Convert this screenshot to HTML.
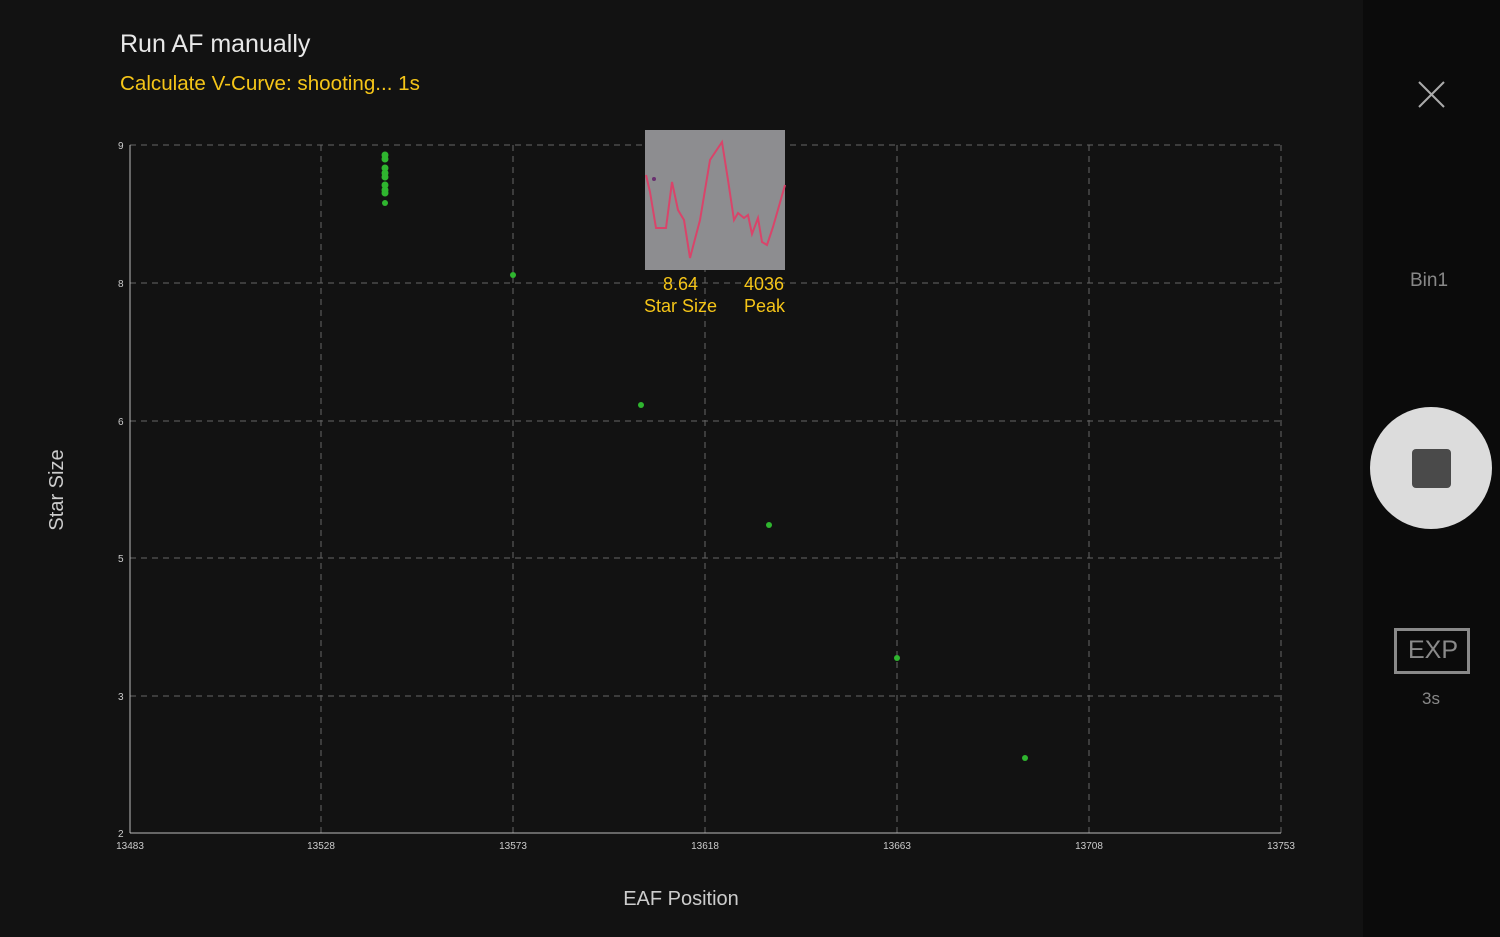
<!DOCTYPE html>
<html><head><meta charset="utf-8"><style>
body{margin:0;width:1500px;height:937px;background:#121212;overflow:hidden;font-family:"Liberation Sans",sans-serif;position:relative}
.t{position:absolute;white-space:nowrap}
</style></head><body>
<div style="position:absolute;left:1363px;top:0;width:137px;height:937px;background:#0b0b0b"></div>
<div class="t" style="left:120px;top:30px;font-size:25px;color:#e8e8e8">Run AF manually</div>
<div class="t" style="left:120px;top:72px;font-size:20.6px;color:#f5c518">Calculate V-Curve: shooting... 1s</div>
<svg style="position:absolute;left:0;top:0" width="1500" height="937">
<g stroke="#666" stroke-width="1" stroke-dasharray="6,5" fill="none">
<line x1="130" y1="145" x2="1281" y2="145"/><line x1="130" y1="283" x2="1281" y2="283"/><line x1="130" y1="421" x2="1281" y2="421"/><line x1="130" y1="558" x2="1281" y2="558"/><line x1="130" y1="696" x2="1281" y2="696"/>
<line x1="321" y1="145" x2="321" y2="833"/><line x1="513" y1="145" x2="513" y2="833"/><line x1="705" y1="145" x2="705" y2="833"/><line x1="897" y1="145" x2="897" y2="833"/><line x1="1089" y1="145" x2="1089" y2="833"/><line x1="1281" y1="145" x2="1281" y2="833"/>
</g>
<line x1="130" y1="145" x2="130" y2="833" stroke="#bbb"/><line x1="130" y1="833" x2="1281" y2="833" stroke="#bbb"/>
<g font-size="10" fill="#ccc" font-family="Liberation Sans">
<text x="118" y="149">9</text><text x="118" y="287">8</text><text x="118" y="425">6</text><text x="118" y="562">5</text><text x="118" y="700">3</text><text x="118" y="837">2</text>
<g text-anchor="middle"><text x="130" y="849">13483</text><text x="321" y="849">13528</text><text x="513" y="849">13573</text><text x="705" y="849">13618</text><text x="897" y="849">13663</text><text x="1089" y="849">13708</text><text x="1281" y="849">13753</text></g>
</g>
<g fill="#2fb52f">
<circle cx="385" cy="155" r="3.5"/><circle cx="385" cy="159" r="3.5"/><circle cx="385" cy="168" r="3.5"/><circle cx="385" cy="173" r="3.5"/><circle cx="385" cy="177" r="3.5"/><circle cx="385" cy="185" r="3.5"/><circle cx="385" cy="190" r="3.5"/><circle cx="385" cy="193" r="3.5"/><circle cx="385" cy="203" r="3"/>
<circle cx="513" cy="275" r="3"/><circle cx="641" cy="405" r="3"/><circle cx="769" cy="525" r="3"/><circle cx="897" cy="658" r="3"/><circle cx="1025" cy="758" r="3"/>
</g>
<rect x="645" y="130" width="140" height="140" fill="#8d8d90"/>
<polyline fill="none" stroke="#d9446a" stroke-width="2" points="646,175 650,192 656,228 666,228 672,182 678,210 684,220 690,258 700,220 710,160 718,148 722,142 728,180 734,220 738,213 744,218 748,215 752,234 758,218 762,242 767,245 773,227 785,185"/>
<circle cx="654" cy="179" r="2" fill="#6a3070"/>
<text x="63" y="490" font-size="20" fill="#ccc" text-anchor="middle" transform="rotate(-90 63 490)" font-family="Liberation Sans">Star Size</text>
<text x="681" y="905" font-size="20" fill="#ccc" text-anchor="middle" font-family="Liberation Sans">EAF Position</text>
<g stroke="#aaa" stroke-width="2"><line x1="1419" y1="82" x2="1444" y2="107"/><line x1="1444" y1="82" x2="1419" y2="107"/></g>
<circle cx="1431" cy="468" r="61" fill="#dcdcdc"/>
<rect x="1412" y="449" width="39" height="39" rx="4" fill="#4a4a4a"/>
<rect x="1395.5" y="629.5" width="73" height="43" fill="none" stroke="#8a8a8a" stroke-width="3"/>
</svg>
<div class="t" style="left:663px;top:274px;font-size:18px;color:#f5c518">8.64</div>
<div class="t" style="left:744px;top:274px;font-size:18px;color:#f5c518">4036</div>
<div class="t" style="left:644px;top:296px;font-size:18px;color:#f5c518">Star Size</div>
<div class="t" style="left:744px;top:296px;font-size:18px;color:#f5c518">Peak</div>
<div class="t" style="left:1410px;top:270px;font-size:19px;color:#888">Bin1</div>
<div class="t" style="left:1408px;top:636px;font-size:25px;color:#8a8a8a">EXP</div>
<div class="t" style="left:1422px;top:689px;font-size:17px;color:#888">3s</div>
</body></html>
